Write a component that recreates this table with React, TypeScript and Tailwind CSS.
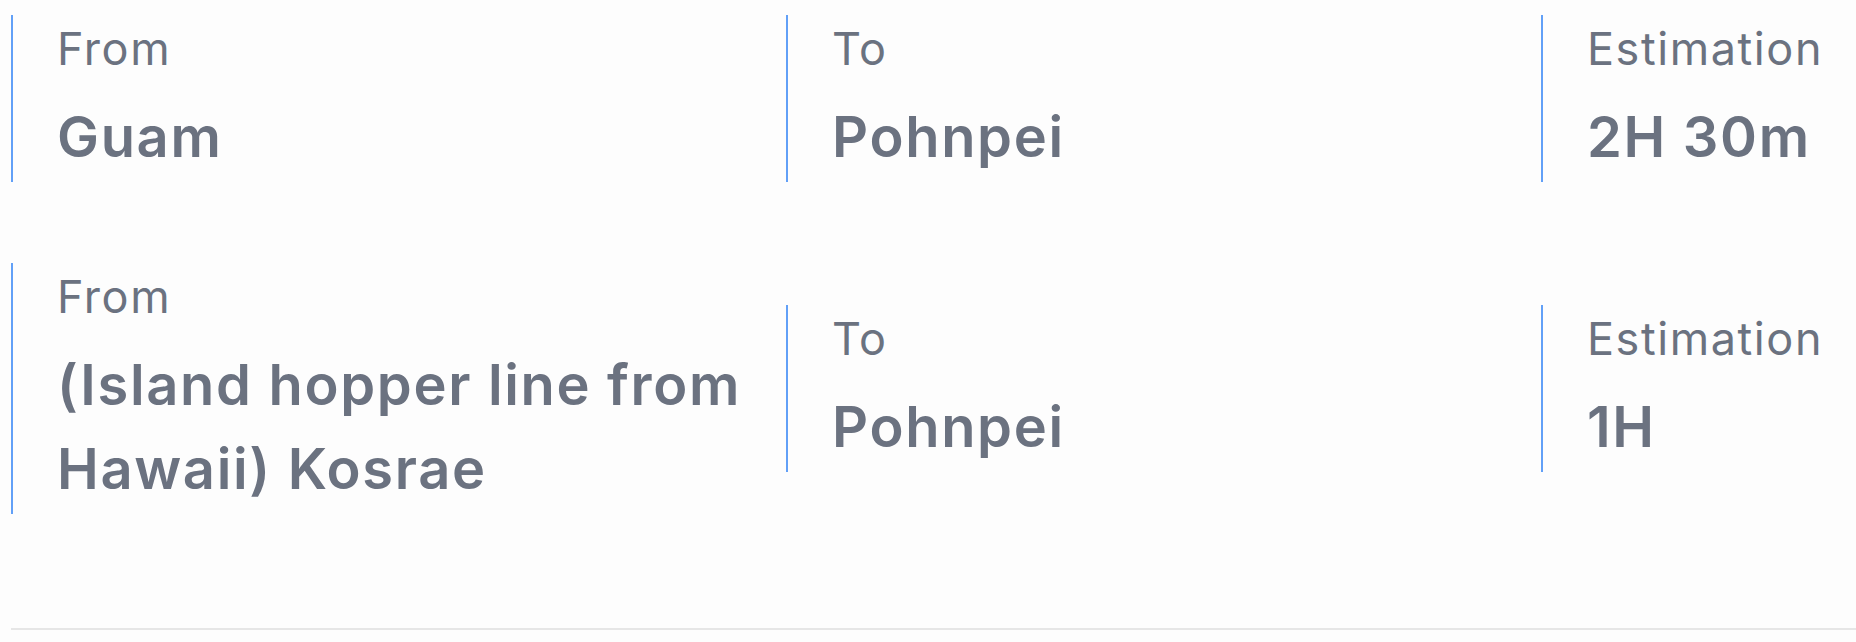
const routes = [
  { from: 'Guam', to: 'Pohnpei', estimation: '2H 30m' },
  { from: '(Island hopper line from Hawaii) Kosrae', to: 'Pohnpei', estimation: '1H' },
]

// One labelled value with the blue rule on the left
const Field = ({ label, value, width }: { label: string; value: string; width: string }) => (
  <div className={`${width} shrink-0 border-l-2 border-[#62a0f7] pl-[44px] pr-10 pb-[3px]`}>
    <p className="text-[45px] leading-[68px] font-normal tracking-[0.035em] text-[#6b7280]">{label}</p>
    <p className="mt-3 text-[56px] leading-[84px] font-semibold tracking-[0.03em] text-[#6b7280]">{value}</p>
  </div>
)

const App = () => {
  return (
    <div className="min-h-[642px] bg-[#fdfdfd] overflow-hidden" style={{ fontFamily: 'Inter, "Noto Sans", sans-serif' }}>
      <div className="pl-[11px] pt-[15px]">
        <div className="flex flex-col gap-[81px]">
          {routes.map((r, i) => (
            <div key={i} className="flex items-center">
              <Field label="From" value={r.from} width="w-[775px]" />
              <Field label="To" value={r.to} width="w-[755px]" />
              <Field label="Estimation" value={r.estimation} width="w-[340px]" />
            </div>
          ))}
        </div>
        <div className="mt-[114px] border-t-2 border-[#e6e6e6]" />
      </div>
    </div>
  )
}

export default App
